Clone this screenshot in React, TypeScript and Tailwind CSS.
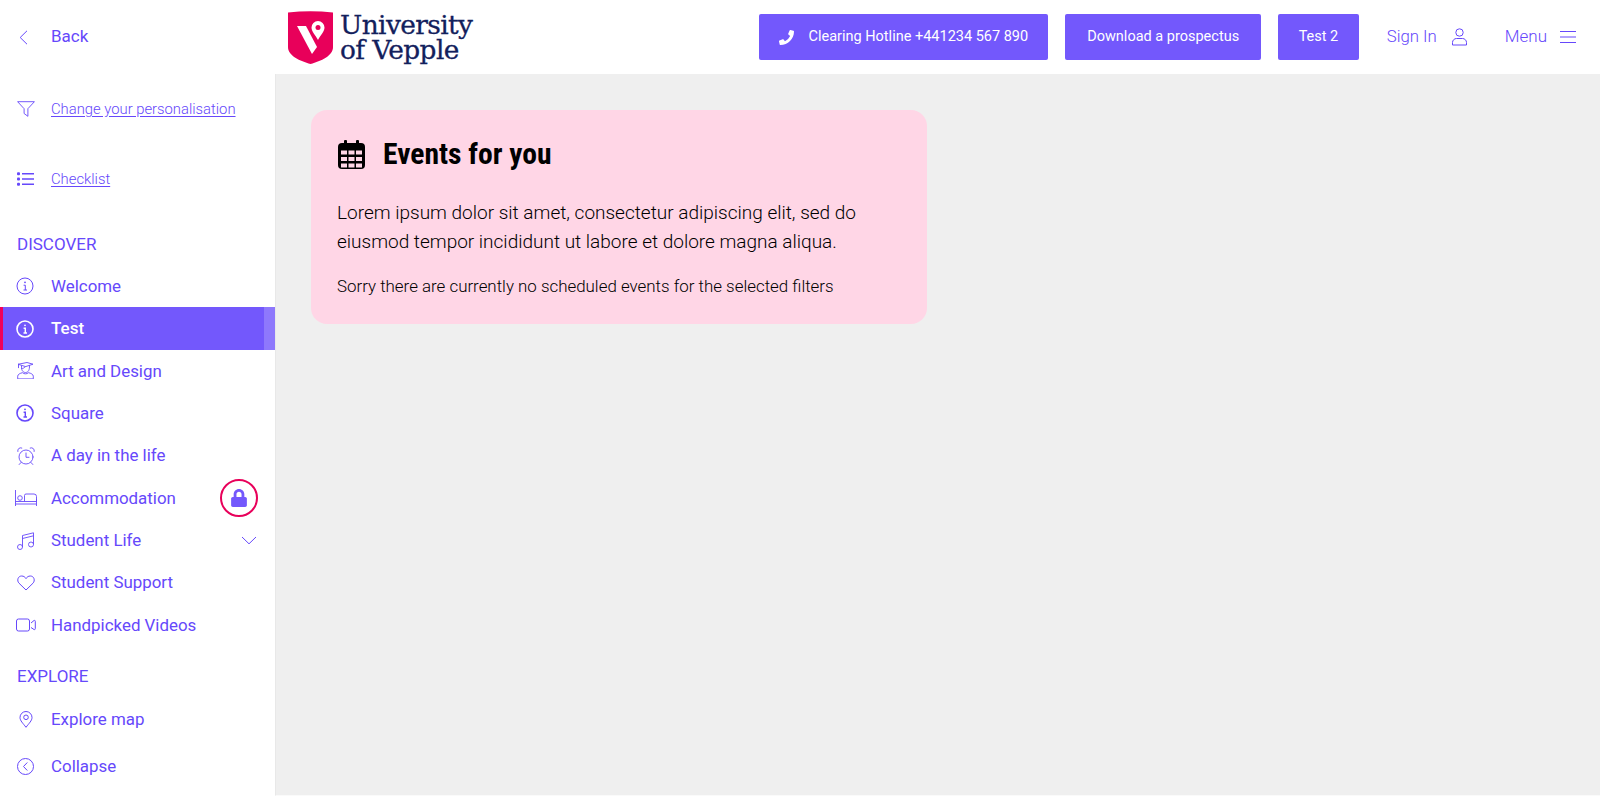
import React from "react";
import { FaPhoneAlt, FaLock } from "react-icons/fa";

function FilterIcon() {
  return (
    <svg width="18" height="16" viewBox="0 0 18 16" fill="none" stroke="currentColor" strokeWidth="0.9" strokeLinejoin="round">
      <path d="M0.600 0.700h16.800l-6.500 7v7.600l-3.800-2.800v-4.800z" />
    </svg>
  );
}

function GradIcon() {
  return (
    <svg width="17" height="17" viewBox="0 0 17 17" fill="none" stroke="currentColor" strokeWidth="0.9" strokeLinejoin="round" strokeLinecap="round">
      <path d="M1.500 2.200L10 .5l6 1.700-7 2.300z" />
      <path d="M4.500 4c-.3 4 1.200 6.500 4 6.500s4.200-2.500 4-6.800" />
      <path d="M4.500 6.500c1.800 0 3-.6 3.800-1.800M1.500 2.200v3.500" />
      <path d="M.7 16.500v-2.300c0-1.800 2.400-3 4.800-3.500.8 1.500 5.200 1.500 6 0 2.400.5 4.800 1.700 4.800 3.500v2.300z" />
    </svg>
  );
}

function BedIcon() {
  return (
    <svg width="22" height="16" viewBox="0 0 22 16" fill="none" stroke="currentColor" strokeWidth="0.9" strokeLinejoin="round">
      <path d="M.5 0v16M.5 11.500h21M21.500 16V9M.5 14h21" />
      <circle cx="5" cy="8" r="2.300" />
      <path d="M9.500 11.500V5.500a1.500 1.500 0 0 1 1.500-1.500h8a2.500 2.500 0 0 1 2.500 2.500v5" />
    </svg>
  );
}

function VideoIcon() {
  return (
    <svg width="20" height="14" viewBox="0 0 20 14" fill="none" stroke="currentColor" strokeWidth="1" strokeLinejoin="round">
      <rect x="0.500" y="1" width="13" height="12" rx="2" />
      <path d="M15 5l3-2.500c.8-.3 1.300 0 1.300.8v7.400c0 .8-.5 1.100-1.300.8L15 9.500" />
    </svg>
  );
}

function CircleBack() {
  return (
    <svg width="17" height="17" viewBox="0 0 17 17" fill="none" stroke="currentColor" strokeWidth="1">
      <circle cx="8.500" cy="8.500" r="8" />
      <path d="M10.300 4.500L6.500 8.500l3.800 4" />
    </svg>
  );
}

function InfoCircle({ bold }: { bold?: boolean }) {
  return (
    <svg width="18" height="18" viewBox="0 0 18 18" fill="none" stroke="currentColor" strokeWidth={bold ? 1.6 : 1}>
      <circle cx="9" cy="9" r="8" />
      <path d="M7.600 8.200H9.300V13M7.500 13h3.500" strokeWidth={bold ? 1.4 : 1} />
      <circle cx="9" cy="5.300" r="0.900" fill="currentColor" stroke="none" />
    </svg>
  );
}

function ListIcon() {
  return (
    <svg width="17" height="14" viewBox="0 0 17 14" fill="none" stroke="currentColor" strokeWidth="1.500">
      <rect x="0" y="0.300" width="3" height="3" rx="1" fill="currentColor" stroke="none" />
      <rect x="0" y="5.500" width="3" height="3" rx="1" fill="currentColor" stroke="none" />
      <rect x="0" y="10.700" width="3" height="3" rx="1" fill="currentColor" stroke="none" />
      <path d="M5 1.800h12M5 7h12M5 12.200h12" />
    </svg>
  );
}

function ClockIcon() {
  return (
    <svg width="18" height="18" viewBox="0 0 18 18" fill="none" stroke="currentColor" strokeWidth="0.900" strokeLinecap="round" strokeLinejoin="round">
      <circle cx="9" cy="10" r="7" />
      <path d="M9 6v4.300h3" />
      <path d="M.8 4.500a3 3 0 0 1 4-3.500M17.200 4.500a3 3 0 0 0-4-3.500M4 15.500l-1.800 2M14 15.500l1.800 2" />
    </svg>
  );
}

function MusicIcon() {
  return (
    <svg width="18" height="18" viewBox="0 0 18 18" fill="none" stroke="currentColor" strokeWidth="0.900" strokeLinejoin="round">
      <circle cx="3" cy="15" r="2.500" />
      <circle cx="14" cy="12.500" r="2.500" />
      <path d="M5.500 15V3.500L16.500.8v11.700M5.500 6.500l11-2.700" />
    </svg>
  );
}

function HeartIcon() {
  return (
    <svg width="18" height="16" viewBox="0 0 18 16" fill="none" stroke="currentColor" strokeWidth="1" strokeLinejoin="round">
      <path d="M9 15L2 8.200C-.3 5.800.7 1 4.700 1c2 0 3.400 1.100 4.300 2.600C9.900 2.100 11.300 1 13.300 1c4 0 5 4.800 2.700 7.200z" />
    </svg>
  );
}

function PinIcon() {
  return (
    <svg width="14" height="17" viewBox="0 0 14 17" fill="none" stroke="currentColor" strokeWidth="1" strokeLinejoin="round">
      <path d="M7 16.300C4 12.300 1 9.700 1 6.500a6 6 0 0 1 12 0c0 3.200-3 5.800-6 9.800z" />
      <circle cx="7" cy="6.300" r="2.300" />
    </svg>
  );
}

function UserIcon() {
  return (
    <svg width="17" height="18" viewBox="0 0 17 18" fill="none" stroke="currentColor" strokeWidth="1">
      <circle cx="8.500" cy="4.500" r="3.700" />
      <path d="M1.500 17v-2.500c0-2.200 1.800-4 4-4h6c2.200 0 4 1.800 4 4V17z" />
    </svg>
  );
}

function MenuIcon() {
  return (
    <svg width="16" height="14" viewBox="0 0 16 14" fill="none" stroke="currentColor" strokeWidth="1">
      <path d="M0 1.500h16M0 7h16M0 12.500h16" />
    </svg>
  );
}

function CalendarIcon() {
  const cols = [3, 10.500, 18];
  const rows = [10.500, 17, 23.500];
  return (
    <svg width="27" height="29" viewBox="0 0 27 29">
      <rect x="0" y="3" width="27" height="26" rx="4" fill="#000" />
      <rect x="6" y="0" width="3" height="6" rx="1" fill="#000" />
      <rect x="18" y="0" width="3" height="6" rx="1" fill="#000" />
      {cols.map((x) =>
        rows.map((y) => <rect key={`${x}-${y}`} x={x} y={y} width="6" height="4" fill="#ffd6e6" />),
      )}
    </svg>
  );
}

function Shield() {
  return (
    <svg width="45" height="53" viewBox="0 0 45 53">
      <path d="M0 1.500C15 -.2 30 -.2 45 1.500V36C45 45 33 50 22.500 53C12 50 0 45 0 36z" fill="#e8005a" />
      <path d="M9 15h9l11 21-5 7z" fill="#fff" />
      <path d="M30 10a6.500 6.500 0 0 1 6.500 6.500c0 4-4 7.500-6.500 12.500-2.500-5-6.500-8.500-6.500-12.500A6.500 6.500 0 0 1 30 10z" fill="#fff" />
      <circle cx="30" cy="16.500" r="2.500" fill="#e8005a" />
    </svg>
  );
}

function NavRow({ icon, label, right }: { icon: React.ReactNode; label: string; right?: React.ReactNode }) {
  return (
    <div className="flex h-[42.400px] items-center pl-[15px] pr-[17px] text-[#6648fb]">
      <span className="flex w-[36px] shrink-0 items-center justify-start">{icon}</span>
      <span className="flex-1 text-[16.900px] leading-none">{label}</span>
      {right}
    </div>
  );
}

export default function App() {
  return (
    <div className="flex h-[796px] w-[1600px] overflow-hidden bg-white font-['Roboto',sans-serif]">
      <aside className="flex w-[275px] shrink-0 flex-col bg-white text-[#6648fb]">
        <div className="flex h-[74px] shrink-0 items-center pl-[19px]">
          <span className="flex w-[32px] items-center">
            <svg width="9" height="15" viewBox="0 0 9 15" fill="none" stroke="currentColor" strokeWidth="1">
              <path d="M8 .8L1.200 7.500 8 14.200" />
            </svg>
          </span>
          <span className="text-[17px]">Back</span>
        </div>
        <div className="mt-[13px] flex h-[44px] shrink-0 items-center pl-[17px] font-light">
          <span className="flex w-[34px] items-center"><FilterIcon /></span>
          <span className="text-[14.800px] underline underline-offset-2">Change your personalisation</span>
        </div>
        <div className="mt-[26px] flex h-[44px] shrink-0 items-center pl-[17px] font-light">
          <span className="flex w-[34px] items-center"><ListIcon /></span>
          <span className="text-[14.800px] underline underline-offset-2">Checklist</span>
        </div>
        <div className="mt-[32px] pl-[17px] text-[17px] leading-[22px]">DISCOVER</div>
        <div className="mt-[10px] flex flex-col">
          <NavRow icon={<span className="pl-[1px]"><InfoCircle /></span>} label="Welcome" />
          <div className="relative flex h-[42.400px] items-center bg-[#7358fc] pl-[16px] text-white">
            <span className="absolute left-0 top-0 h-full w-[3px] bg-[#f0005a]" />
            <span className="absolute right-0 top-0 h-full w-[11px] bg-[#8e78fc]" />
            <span className="flex w-[35px] items-center"><InfoCircle bold /></span>
            <span className="text-[17px] font-medium leading-none">Test</span>
          </div>
          <NavRow icon={<span className="pl-[2px]"><GradIcon /></span>} label="Art and Design" />
          <NavRow icon={<span className="pl-[1px]"><InfoCircle bold /></span>} label="Square" />
          <NavRow icon={<span className="pl-[2px]"><ClockIcon /></span>} label="A day in the life" />
          <NavRow
            icon={<BedIcon />}
            label="Accommodation"
            right={
              <span className="flex h-[38px] w-[38px] items-center justify-center rounded-full border-2 border-[#e8005a] text-[#7358fc]">
                <FaLock size={18} />
              </span>
            }
          />
          <NavRow
            icon={<span className="pl-[2px]"><MusicIcon /></span>}
            label="Student Life"
            right={
              <svg width="16" height="9" viewBox="0 0 16 9" fill="none" stroke="currentColor" strokeWidth="1" className="mr-[1px]">
                <path d="M1 1l7 6.800L15 1" />
              </svg>
            }
          />
          <NavRow icon={<span className="pl-[2px]"><HeartIcon /></span>} label="Student Support" />
          <NavRow icon={<span className="pl-[1px]"><VideoIcon /></span>} label="Handpicked Videos" />
        </div>
        <div className="mt-[18px] pl-[17px] text-[17px] leading-[22px]">EXPLORE</div>
        <div className="mt-[12px]">
          <NavRow icon={<span className="pl-[4px]"><PinIcon /></span>} label="Explore map" />
        </div>
        <div className="mt-[4px]">
          <NavRow icon={<span className="pl-[2px]"><CircleBack /></span>} label="Collapse" />
        </div>
      </aside>
      <div className="flex min-w-0 flex-1 flex-col">
        <header className="flex h-[74px] shrink-0 items-center bg-white pl-[13px] pr-[24px]">
          <div className="flex items-center gap-[7px]">
            <Shield />
            <div className="font-['DejaVu_Serif',serif] text-[26.400px] leading-[25px] tracking-[-0.600px] text-[#12205c] [-webkit-text-stroke:0.3px_#12205c]">
              <div>University</div>
              <div>of Vepple</div>
            </div>
          </div>
          <div className="ml-auto flex items-center">
            <button className="flex h-[46px] items-center rounded-[2px] bg-[#7358fc] px-[20px] text-[14.500px] text-white">
              <span className="mr-[15px] -scale-x-100"><FaPhoneAlt size={15} /></span>
              Clearing Hotline +441234 567 890
            </button>
            <button className="ml-[17px] h-[46px] rounded-[2px] bg-[#7358fc] px-[22px] text-[14.500px] text-white">Download a prospectus</button>
            <button className="ml-[17px] h-[46px] rounded-[2px] bg-[#7358fc] px-[20.500px] text-[14.500px] text-white">Test 2</button>
            <span className="ml-[28px] flex items-center text-[16.800px] font-light text-[#6648fb]">
              Sign In
              <span className="ml-[14px]"><UserIcon /></span>
            </span>
            <span className="ml-[37px] flex items-center text-[17px] font-light text-[#6648fb]">
              Menu
              <span className="ml-[13px]"><MenuIcon /></span>
            </span>
          </div>
        </header>
        <main className="flex-1 border-b border-l border-b-[#fafafa] border-l-[#e8e8e8] bg-[#efefef] pl-[35px] pt-[36px]">
          <section className="h-[214px] w-[616px] rounded-[16px] bg-[#ffd6e6] pl-[27px] pr-[26px] pt-[28px] text-black">
            <div className="flex items-center">
              <CalendarIcon />
              <h2 className="ml-[18px] text-[29.600px] font-bold leading-[32px] [font-stretch:75%]">Events for you</h2>
            </div>
            <p className="-ml-[1px] mt-[29px] text-[19px] font-light leading-[28.500px]">
              Lorem ipsum dolor sit amet, consectetur adipiscing elit, sed do eiusmod tempor incididunt ut labore et dolore magna aliqua.
            </p>
            <p className="-ml-[1px] mt-[18px] text-[16.900px] font-light leading-[24px]">Sorry there are currently no scheduled events for the selected filters</p>
          </section>
        </main>
      </div>
    </div>
  );
}
